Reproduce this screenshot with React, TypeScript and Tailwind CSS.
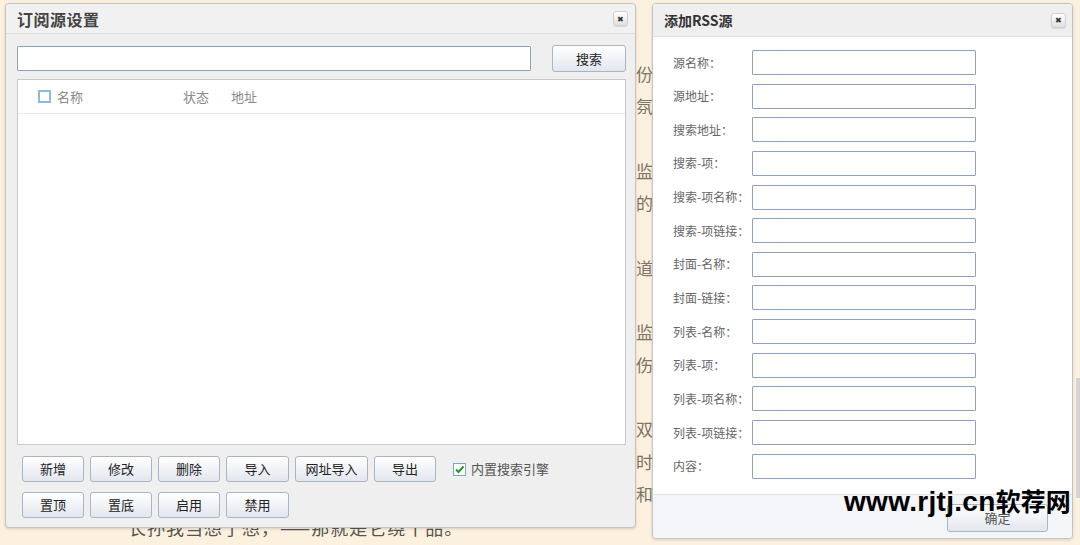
import React from "react";

const FONT = "font-['Noto_Sans_CJK_SC','Liberation_Sans',sans-serif]";
const btn =
  "h-[26px] border border-[#a9b5c6] rounded-[3px] bg-gradient-to-b from-white to-[#e2e7ee] text-[13px] text-[#222] flex items-center justify-center shadow-[inset_0_1px_0_#fff]";

function CloseBtn() {
  return (
    <div className="w-[15px] h-[15px] rounded-[3px] border border-[#cfcfcf] bg-gradient-to-b from-white to-[#e0e0e0] flex items-center justify-center shadow-[0_1px_1px_rgba(0,0,0,0.1)]">
      <span className="text-[8px] leading-none text-[#333]">✖</span>
    </div>
  );
}

const bgLines: { text: string; cls: string }[] = [
  { text: "份量", cls: "pl-[636px]" },
  { text: "氛围", cls: "pl-[636px]" },
  { text: "", cls: "" },
  { text: "监控", cls: "pl-[636px]" },
  { text: "的人", cls: "pl-[636px]" },
  { text: "", cls: "" },
  { text: "道理", cls: "pl-[636px]" },
  { text: "", cls: "" },
  { text: "监控", cls: "pl-[636px]" },
  { text: "伤害", cls: "pl-[636px]" },
  { text: "", cls: "" },
  { text: "双方", cls: "pl-[636px]" },
  { text: "时间", cls: "pl-[636px]" },
  { text: "和平", cls: "pl-[636px]" },
];

const formLabels = [
  "源名称：",
  "源地址：",
  "搜索地址：",
  "搜索-项：",
  "搜索-项名称：",
  "搜索-项链接：",
  "封面-名称：",
  "封面-链接：",
  "列表-名称：",
  "列表-项：",
  "列表-项名称：",
  "列表-项链接：",
  "内容：",
];

export default function App() {
  return (
    <div className={`relative w-[1080px] h-[545px] overflow-hidden bg-[#fcf1de] ${FONT}`}>
      {/* background page */}
      <div className="flex w-full h-full">
        <div className="flex-1 pt-[58px] text-[17px] text-[#7d7468]">
          {bgLines.map((l, i) => (
            <div key={i} className={`h-[32.3px] leading-[32px] whitespace-nowrap ${l.cls}`}>
              {l.text}
            </div>
          ))}
          <div className="mt-[1px] pl-[128px] h-[32px] leading-[32px] text-[18px] tracking-[1px] whitespace-nowrap text-[#555]">
            长孙我当想了想，——那就是它绕十品。
          </div>
        </div>
        <div className="w-[4px] pt-[378px]">
          <div className="h-[120px] bg-[#d4d4d4]" />
        </div>
      </div>

      {/* Left dialog */}
      <div className="absolute left-[5px] top-[3px] w-[631px] h-[525px] rounded-[4px] border border-[#c4c4c4] bg-[#efefef] shadow-[0_1px_3px_rgba(0,0,0,0.15)] flex flex-col">
        <div className="h-[30px] shrink-0 flex items-center justify-between pl-[11px] pr-[7px] border-b border-[#dcdcdc] bg-[#f1f1f1] rounded-t-[4px]">
          <span className="text-[16px] font-bold text-[#444] tracking-[0.5px]">订阅源设置</span>
          <CloseBtn />
        </div>
        <div className="flex-1 flex flex-col pl-[11px] pr-[9px] pt-[11px]">
          <div className="flex items-center justify-between">
            <div className="w-[514px] h-[25px] bg-white border border-[#8fa3bf] rounded-[1px]" />
            <div className={`${btn} w-[74px] h-[27px]`}>搜索</div>
          </div>
          <div className="mt-[7px] h-[366px] bg-white border border-[#c9c9c9]">
            <div className="h-[34px] flex items-center border-b border-[#e8e8e8] text-[13px] text-[#8a8a8a]">
              <div className="ml-[20px] w-[13px] h-[13px] border-2 border-[#8dbbe0] bg-white" />
              <span className="ml-[6px] w-[126px]">名称</span>
              <span className="w-[48px]">状态</span>
              <span>地址</span>
            </div>
          </div>
          <div className="mt-[11px] pl-[5px] flex flex-col gap-[10px]">
            <div className="flex items-center gap-[6px]">
              <div className={`${btn} w-[62px]`}>新增</div>
              <div className={`${btn} w-[62px]`}>修改</div>
              <div className={`${btn} w-[62px]`}>删除</div>
              <div className={`${btn} w-[63px]`}>导入</div>
              <div className={`${btn} w-[73px]`}>网址导入</div>
              <div className={`${btn} w-[62px]`}>导出</div>
              <div className="ml-[11px] flex items-center gap-[5px]">
                <div className="w-[13px] h-[13px] border border-[#7aa6cf] bg-white flex items-center justify-center">
                  <svg width="11" height="11" viewBox="0 0 11 11">
                    <path d="M2 5.5 L4.5 8 L9.5 2.5" fill="none" stroke="#1e9b2a" strokeWidth="2" />
                  </svg>
                </div>
                <span className="text-[13px] text-[#555]">内置搜索引擎</span>
              </div>
            </div>
            <div className="flex items-center gap-[6px]">
              <div className={`${btn} w-[62px]`}>置顶</div>
              <div className={`${btn} w-[62px]`}>置底</div>
              <div className={`${btn} w-[62px]`}>启用</div>
              <div className={`${btn} w-[63px]`}>禁用</div>
            </div>
          </div>
        </div>
      </div>

      {/* Right dialog */}
      <div className="absolute left-[652px] top-[3px] w-[421px] h-[536px] rounded-[4px] border border-[#c4c4c4] bg-white shadow-[0_1px_3px_rgba(0,0,0,0.15)] flex flex-col overflow-hidden">
        <div className="h-[33px] shrink-0 flex items-center justify-between pl-[11px] pr-[6px] bg-[#efefef] border-b border-[#e2e2e2]">
          <span className="text-[14px] font-bold text-[#333]">添加RSS源</span>
          <CloseBtn />
        </div>
        <div className="h-[457px] shrink-0 pt-[13px] pl-[20px] flex flex-col gap-[8.65px]">
          {formLabels.map((l) => (
            <div key={l} className="flex items-center h-[25px]">
              <span className="w-[79px] text-[12px] text-[#666] whitespace-nowrap">{l}</span>
              <div className="w-[224px] h-[25px] border border-[#8ea2c0] bg-white rounded-[1px]" />
            </div>
          ))}
        </div>
        <div className="flex-1 bg-[#f4f5f8] border-t border-[#dde3ec] flex justify-end items-start pt-[9px] pr-[24px]">
          <div className={`${btn} w-[101px] h-[28px] text-[#555]`}>确定</div>
        </div>
      </div>

      {/* Watermark */}
      <div className="absolute left-[844px] top-[481px] flex items-baseline text-black font-bold whitespace-nowrap">
        <span className="font-['Liberation_Sans',sans-serif] text-[28px] tracking-[0.3px]">www.rjtj.cn</span>
        <span className="font-['Noto_Sans_CJK_SC',sans-serif] text-[25px]">软荐网</span>
      </div>
    </div>
  );
}
